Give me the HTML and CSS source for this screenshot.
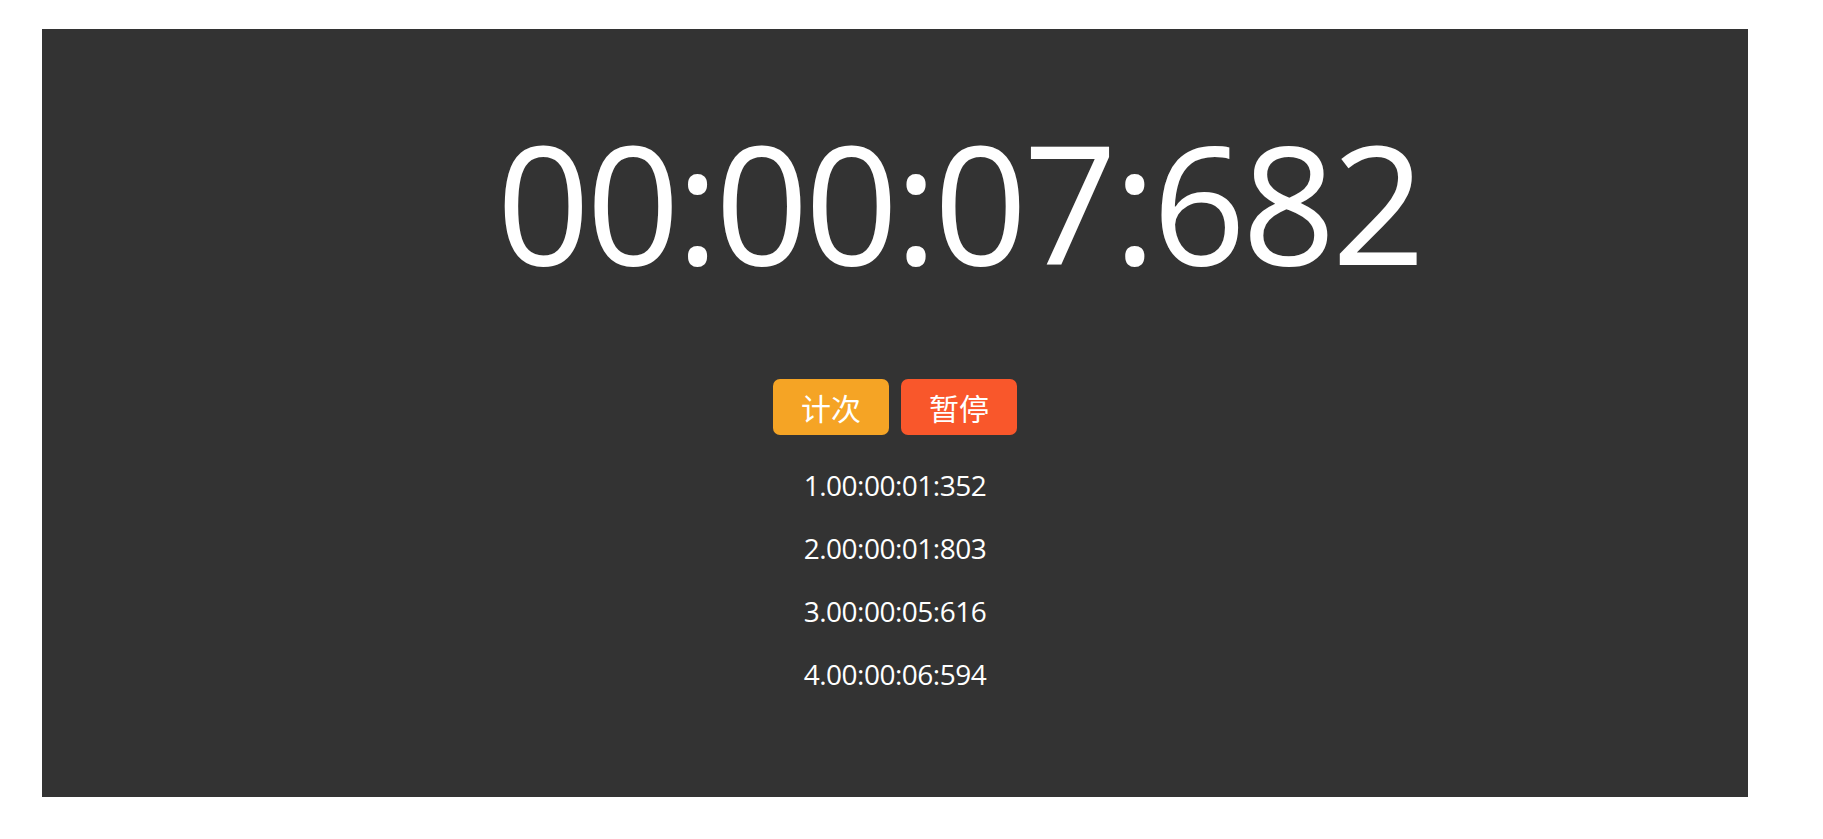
FILE: index.html
```html
<!DOCTYPE html>
<html lang="zh-CN">
<head>
<meta charset="utf-8">
<title>秒表</title>
<link rel="stylesheet" href="styles.css">
</head>
<body>
<div class="panel">
  <div class="time">00:00:07:682</div>
  <div class="controls">
    <button class="btn btn-lap">计次</button>
    <button class="btn btn-pause">暂停</button>
  </div>
  <ul class="laps">
    <li>1.00:00:01:352</li>
    <li>2.00:00:01:803</li>
    <li>3.00:00:05:616</li>
    <li>4.00:00:06:594</li>
  </ul>
</div>
</body>
</html>
```

FILE: styles.css
```css
html, body {
  margin: 0;
  padding: 0;
  background: #ffffff;
}

body {
  font-family: "Open Sans", "Noto Sans CJK SC", sans-serif;
}

.panel {
  box-sizing: border-box;
  width: 1706px;
  height: 768px;
  margin: 29px 0 0 42px;
  padding-top: 91px;
  background: #333333;
  color: #ffffff;
  display: flex;
  flex-direction: column;
  align-items: center;
}

.time {
  align-self: stretch;
  box-sizing: border-box;
  padding-left: 128px;
  text-align: center;
  font-size: 164px;
  line-height: 164px;
  letter-spacing: -4px;
  white-space: nowrap;
}

.controls {
  display: flex;
  gap: 12px;
  margin-top: 95px;
}

.btn {
  box-sizing: border-box;
  width: 116px;
  height: 56px;
  padding: 0;
  border: none;
  border-radius: 7px;
  color: #ffffff;
  font-family: "Noto Sans CJK SC", sans-serif;
  font-size: 30px;
  line-height: 56px;
  cursor: pointer;
}

.btn-lap {
  background: #f5a425;
}

.btn-pause {
  background: #f9572b;
}

.laps {
  list-style: none;
  margin: 19px 0 0;
  padding: 0;
  text-align: center;
}

.laps li {
  font-size: 28px;
  line-height: 63px;
  letter-spacing: -0.5px;
}
```
